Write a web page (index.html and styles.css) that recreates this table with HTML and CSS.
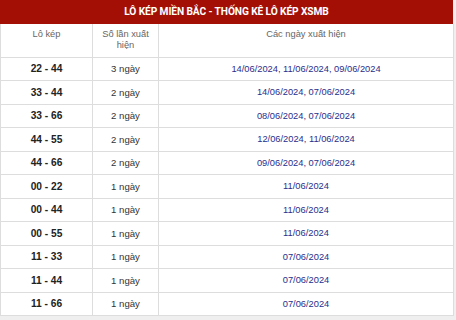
FILE: index.html
```html
<!DOCTYPE html>
<html lang="vi">
<head>
<meta charset="utf-8">
<link rel="stylesheet" href="styles.css">
</head>
<body>
<div class="card">
  <div class="title">LÔ KÉP MIỀN BẮC - THỐNG KÊ LÔ KÉP XSMB</div>
  <table class="stats">
    <colgroup><col class="c1"><col class="c2"><col class="c3"></colgroup>
    <thead>
      <tr><th>Lô kép</th><th>Số lần xuất hiện</th><th>Các ngày xuất hiện</th></tr>
    </thead>
    <tbody>
      <tr><td class="pair">22 - 44</td><td class="cnt">3 ngày</td><td class="dates">14/06/2024, 11/06/2024, 09/06/2024</td></tr>
      <tr><td class="pair">33 - 44</td><td class="cnt">2 ngày</td><td class="dates">14/06/2024, 07/06/2024</td></tr>
      <tr><td class="pair">33 - 66</td><td class="cnt">2 ngày</td><td class="dates">08/06/2024, 07/06/2024</td></tr>
      <tr><td class="pair">44 - 55</td><td class="cnt">2 ngày</td><td class="dates">12/06/2024, 11/06/2024</td></tr>
      <tr><td class="pair">44 - 66</td><td class="cnt">2 ngày</td><td class="dates">09/06/2024, 07/06/2024</td></tr>
      <tr><td class="pair">00 - 22</td><td class="cnt">1 ngày</td><td class="dates">11/06/2024</td></tr>
      <tr><td class="pair">00 - 44</td><td class="cnt">1 ngày</td><td class="dates">11/06/2024</td></tr>
      <tr><td class="pair">00 - 55</td><td class="cnt">1 ngày</td><td class="dates">11/06/2024</td></tr>
      <tr><td class="pair">11 - 33</td><td class="cnt">1 ngày</td><td class="dates">07/06/2024</td></tr>
      <tr><td class="pair">11 - 44</td><td class="cnt">1 ngày</td><td class="dates">07/06/2024</td></tr>
      <tr><td class="pair">11 - 66</td><td class="cnt">1 ngày</td><td class="dates">07/06/2024</td></tr>
    </tbody>
  </table>
</div>
</body>
</html>
```
FILE: styles.css
```css
html, body {
  margin: 0;
  padding: 0;
  background: #efefef;
}
body {
  font-family: "Liberation Sans", Arial, sans-serif;
  width: 456px;
  height: 320px;
  overflow: hidden;
}
.card {
  width: 453px;
  background: #fff;
}
.title {
  height: 24px;
  line-height: 24px;
  background: #a30f05;
  color: #fff;
  font-family: Roboto, "Liberation Sans", sans-serif;
  font-weight: 700;
  font-size: 10.2px;
  text-align: center;
  letter-spacing: -0.1px;
}
.stats {
  width: 453px;
  border-collapse: collapse;
  table-layout: fixed;
  font-size: 9.3px;
}
.c1 { width: 92px; }
.c2 { width: 66px; }
.c3 { width: 295px; }
.stats th {
  font-weight: 400;
  color: #666;
  vertical-align: top;
  height: 33px;
  padding: 5px 8px 0;
  line-height: 11px;
  border: 1px solid #ddd;
  border-top: none;
  box-sizing: border-box;
}
.stats td {
  height: 23.5px;
  padding: 0 4px;
  text-align: center;
  border: 1px solid #ddd;
  box-sizing: border-box;
  color: #333;
}
.stats td.cnt {
  font-size: 9.6px;
}
.stats td.pair {
  font-weight: 700;
  font-size: 10.2px;
  color: #222;
}
.stats td.dates {
  color: #2a2d8c;
}
```
